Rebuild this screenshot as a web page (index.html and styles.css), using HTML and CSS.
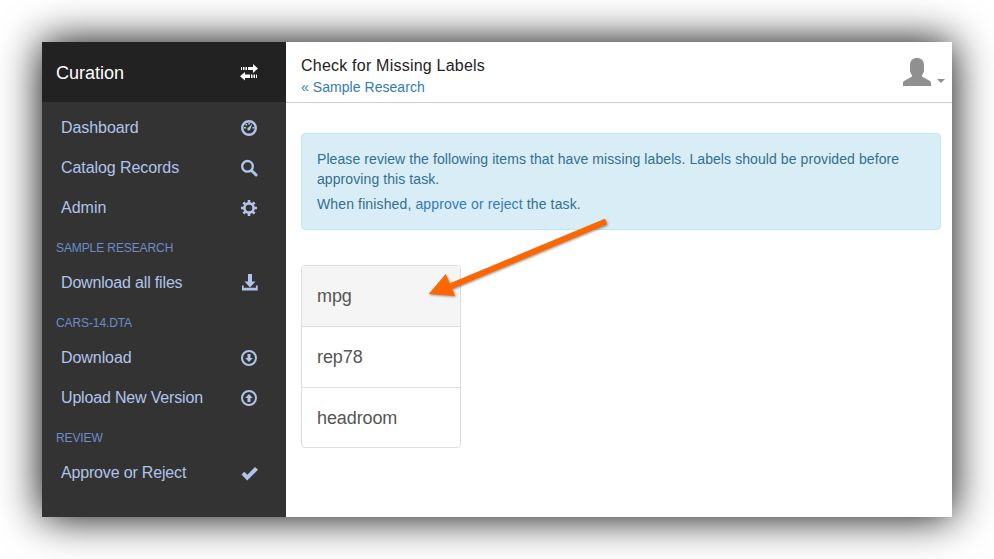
FILE: index.html
```
<!DOCTYPE html>
<html lang="en">
<head>
<meta charset="utf-8">
<title>Check for Missing Labels</title>
<link rel="stylesheet" href="styles.css">
</head>
<body>
<div class="window">
  <aside class="sidebar">
    <div class="brand"><span>Curation</span>
      <svg class="icon" viewBox="0 0 18 18"><path d="M1 3h1v3H1zM3 3h1.500v3H3zM5.500 3h1.500v3H5.500zM8 3h5V0l5 4.500L13 9V6H8zM17 10.500h-1v3.500h1zM15 10.500h-1.500v3.500H15zM12.500 10.500H11v3.500h1.500zM10 10.500H5V8l-5 4.300L5 16.500V14h5z"/></svg>
    </div>
    <nav>
      <a class="item tight"><span>Dashboard</span><svg class="icon" viewBox="0 0 18 18"><circle cx="9" cy="9" r="6.800" class="ring"/><path d="M4 8h2v1.500H4zM12.500 8h2v1.500h-2zM5.500 5h1.700v1.500H5.500zM8.300 4H10v1.500H8.300zM12.300 4.800L10.500 10a1.600 1.600 0 1 1-1.700-1.700z"/></svg></a>
      <a class="item tight"><span>Catalog Records</span><svg class="icon" viewBox="0 0 18 18"><circle cx="7.500" cy="7.300" r="5.300" class="ring"/><path d="M11.500 11.500l4.600 4.500" class="handle"/></svg></a>
      <a class="item"><span>Admin</span><svg class="icon" viewBox="0 0 18 18"><circle cx="9" cy="9" r="4.600" class="gear"/><path d="M9 1v3M9 14v3M1 9h3M14 9h3M3.400 3.400l2.200 2.200M12.400 12.400l2.200 2.200M3.400 14.600l2.200-2.200M12.400 5.600l2.200-2.200" class="teeth"/></svg></a>
      <h2>SAMPLE RESEARCH</h2>
      <a class="item tighter"><span>Download all files</span><svg class="icon" viewBox="0 0 18 18"><path d="M8 0h4v7.500h3.500L10 13.500l-5.500-6H8zM2 11.500h1.700v2.300H16v-2.300h1.700V16.500H2z"/></svg></a>
      <h2>CARS-14.DTA</h2>
      <a class="item tight"><span>Download</span><svg class="icon" viewBox="0 0 18 18"><circle cx="9" cy="9" r="7" class="ring thin"/><path d="M7.500 5h3v4h2.300L9 13 5.200 9h2.300z"/></svg></a>
      <a class="item tighter"><span>Upload New Version</span><svg class="icon" viewBox="0 0 18 18"><circle cx="9" cy="9" r="7" class="ring thin"/><path d="M7.500 13h3V9h2.300L9 5 5.200 9h2.300z"/></svg></a>
      <h2>REVIEW</h2>
      <a class="item tighter"><span>Approve or Reject</span><svg class="icon" viewBox="0 0 18 18"><path d="M1.500 10.500L4.300 7.700l3 3L15 3l3 2.800L7.200 16.500z"/></svg></a>
    </nav>
  </aside>
  <main>
    <header>
      <div><h1>Check for Missing Labels</h1><a class="link back">« Sample Research</a></div>
      <div class="user">
        <svg class="avatar" viewBox="0 0 28 28"><path d="M7 7c0-4.500 3-7 7-7s7 2.500 7 7v5.500c0 1.800-1 3.500-2 4.500v1.500l8 4.500q1 .6 1 1.500v3.500H0v-3.500q0-.9 1-1.500l8-4.500v-1.500c-1-1-2-2.700-2-4.500z"/></svg>
        <span class="caret"></span>
      </div>
    </header>
    <section class="content">
      <div class="alert">
        <p>Please review the following items that have missing labels. Labels should be provided before approving this task.</p>
        <p class="finish">When finished, <a class="link">approve or reject</a> the task.</p>
      </div>
      <ul class="list"><li class="active">mpg</li><li>rep78</li><li>headroom</li></ul>
    </section>
  </main>
</div>
<svg class="pointer" viewBox="0 0 190 90"><path d="M186 5.500L30 70.500" class="shaft"/><path d="M8.700 78L25.700 58l9.300 22z"/></svg>
</body>
</html>
```
FILE: styles.css
```
* { box-sizing: border-box; }
body { margin: 0; padding: 42px; width: 994px; height: 559px; overflow: hidden; background: #fff; font: 14px/20px "Liberation Sans", Arial, sans-serif; color: #333; }
.window { display: flex; width: 910px; height: 475px; background: #fff; box-shadow: 0 0 40px #000; }
.sidebar { width: 244px; background: #333; color: #b0c4ea; }
.brand { display: flex; align-items: center; justify-content: space-between; height: 60px; padding: 1px 28px 0 14px; background: #222; color: #fff; font-size: 18px; }
.icon { width: 18px; height: 18px; flex: none; fill: currentColor; }
.ring { fill: none; stroke: currentColor; stroke-width: 2.4; }
.thin { stroke-width: 2; }
.handle { stroke: currentColor; stroke-width: 3; stroke-linecap: round; }
.gear { fill: none; stroke: currentColor; stroke-width: 2.6; }
.teeth { stroke: currentColor; stroke-width: 2.6; }
nav { padding-top: 6px; }
.item { display: flex; align-items: center; justify-content: space-between; height: 40px; padding: 0 28px 0 19px; font-size: 16px; }
.item span { padding-bottom: 1px; }
.tight { letter-spacing: -.07px; }
.tighter { letter-spacing: -.17px; }
h2 { margin: 0; height: 35px; padding: 0 14px; font-size: 12px; font-weight: 400; line-height: 41px; letter-spacing: -.1px; color: #6f8bc9; }
main { flex: 1; min-width: 0; }
header { display: flex; justify-content: space-between; height: 61px; padding: 13px 7px 0 15px; border-bottom: 1px solid #ccc; }
h1 { margin: 0; font-size: 16px; font-weight: 400; line-height: 22px; letter-spacing: .22px; color: #222; }
.link { color: #337ab7; }
.back { letter-spacing: .05px; }
.user { display: flex; gap: 6px; padding-top: 3px; }
.avatar { width: 28px; height: 28px; fill: #909090; }
.caret { margin-top: 21px; width: 8px; height: 4px; border: 4px solid transparent; border-top-color: #909090; border-bottom: 0; }
.content { padding: 30px 11px 0 15px; }
.alert { height: 97px; padding: 15px; border: 1px solid #bce8f1; border-radius: 4px; background: #d9edf7; color: #31708f; letter-spacing: .085px; }
.alert p { margin: 0 0 5px; }
.alert .finish { letter-spacing: .13px; }
.list { list-style: none; margin: 35px 0 0; padding: 0; width: 160px; height: 183px; border: 1px solid #ddd; border-radius: 4px; overflow: hidden; font-size: 18px; letter-spacing: -.1px; color: #555; }
.list li { height: 61px; padding: 0 15px; line-height: 60px; border-bottom: 1px solid #ddd; }
.list li:last-child { border: 0; }
.list .active { background: #f5f5f5; }
.pointer { position: absolute; left: 420px; top: 216px; width: 190px; height: 90px; fill: #f60; filter: drop-shadow(1px 1px 1px rgba(0,0,0,.4)); }
.shaft { stroke: #f60; stroke-width: 6; }
```
